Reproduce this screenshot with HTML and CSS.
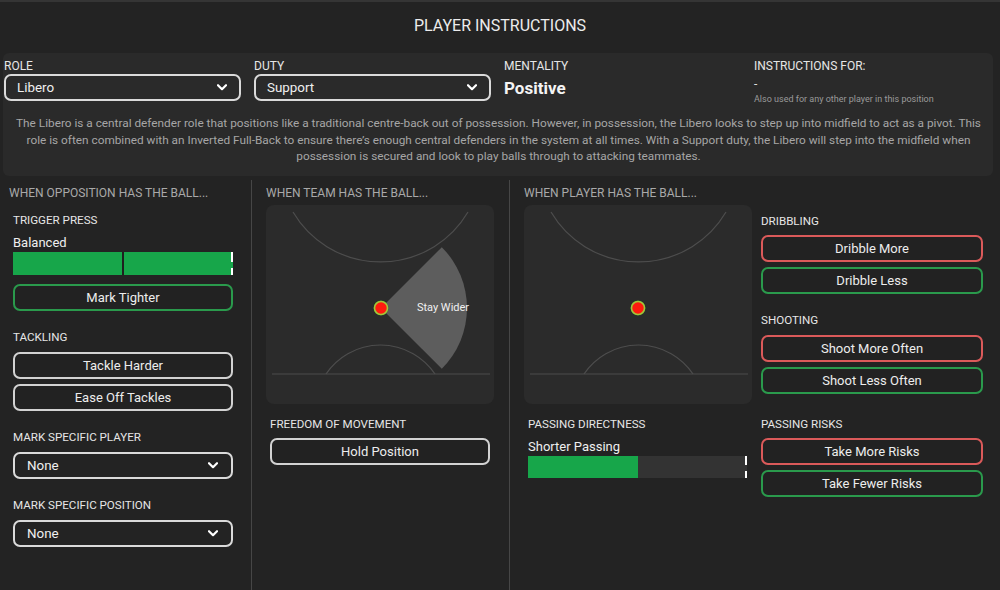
FILE: index.html
```html
<!DOCTYPE html>
<html>
<head>
<meta charset="utf-8">
<link rel="stylesheet" href="styles.css">
</head>
<body>
<div class="title">PLAYER INSTRUCTIONS</div>
<div class="panel">
  <div class="fields">
    <div class="field">
      <div class="flabel">ROLE</div>
      <div class="select"><span>Libero</span><svg class="chev" width="10" height="7" viewBox="0 0 10 7"><path d="M1 1.2 L5 5.2 L9 1.2" fill="none" stroke="#fff" stroke-width="2.2" stroke-linecap="round" stroke-linejoin="round"/></svg></div>
    </div>
    <div class="field">
      <div class="flabel">DUTY</div>
      <div class="select"><span>Support</span><svg class="chev" width="10" height="7" viewBox="0 0 10 7"><path d="M1 1.2 L5 5.2 L9 1.2" fill="none" stroke="#fff" stroke-width="2.2" stroke-linecap="round" stroke-linejoin="round"/></svg></div>
    </div>
    <div class="field">
      <div class="flabel">MENTALITY</div>
      <div class="mentality">Positive</div>
    </div>
    <div class="field">
      <div class="flabel">INSTRUCTIONS FOR:</div>
      <div class="dash">-</div>
      <div class="also">Also used for any other player in this position</div>
    </div>
  </div>
  <p class="desc">The Libero is a central defender role that positions like a traditional centre-back out of possession. However, in possession, the Libero looks to step up into midfield to act as a pivot. This<br>role is often combined with an Inverted Full-Back to ensure there’s enough central defenders in the system at all times. With a Support duty, the Libero will step into the midfield when<br>possession is secured and look to play balls through to attacking teammates.</p>
</div>

<div class="cols">
  <div class="col c1">
    <div class="heading">WHEN OPPOSITION HAS THE BALL...</div>
    <div class="stack">
      <div class="slabel m11">TRIGGER PRESS</div>
      <div class="value m7">Balanced</div>
      <div class="bar m1">
        <div class="seg green"></div>
        <div class="seg green"></div>
      </div>
      <div class="btn green-b m9">Mark Tighter</div>
      <div class="slabel m18">TACKLING</div>
      <div class="btn m7">Tackle Harder</div>
      <div class="btn m5">Ease Off Tackles</div>
      <div class="slabel m18">MARK SPECIFIC PLAYER</div>
      <div class="select sel2 m7"><span>None</span><svg class="chev" width="10" height="7" viewBox="0 0 10 7"><path d="M1 1.2 L5 5.2 L9 1.2" fill="none" stroke="#fff" stroke-width="2.2" stroke-linecap="round" stroke-linejoin="round"/></svg></div>
      <div class="slabel m18">MARK SPECIFIC POSITION</div>
      <div class="select sel2 m7"><span>None</span><svg class="chev" width="10" height="7" viewBox="0 0 10 7"><path d="M1 1.2 L5 5.2 L9 1.2" fill="none" stroke="#fff" stroke-width="2.2" stroke-linecap="round" stroke-linejoin="round"/></svg></div>
    </div>
  </div>

  <div class="col c2">
    <div class="heading">WHEN TEAM HAS THE BALL...</div>
    <div class="pitchbox">
      <svg class="pitch" width="228" height="199" viewBox="0 0 228 199">
        <path d="M27 7 A101.6 101.6 0 0 0 202 7" fill="none" stroke="#4d4d4d" stroke-width="1.2"/>
        <path d="M60 169 A65.7 65.7 0 0 1 169 169" fill="none" stroke="#4d4d4d" stroke-width="1.2"/>
        <path d="M6 169 H224" fill="none" stroke="#4d4d4d" stroke-width="1.2"/>
        <path d="M115 103 L175.8 42.2 A86 86 0 0 1 175.8 163.8 Z" fill="#5d5d5d"/>
        <circle cx="115" cy="103" r="7.5" fill="#2f7d2a"/>
        <circle cx="115" cy="103" r="6.5" fill="#ff1a0e" stroke="#a6c43a" stroke-width="1.6"/>
        <text class="wedge-text" x="177" y="106" text-anchor="middle">Stay Wider</text>
      </svg>
    </div>
    <div class="sub">
      <div class="slabel m12">FREEDOM OF MOVEMENT</div>
      <div class="btn m6">Hold Position</div>
    </div>
  </div>

  <div class="col c3">
    <div class="heading">WHEN PLAYER HAS THE BALL...</div>
    <div class="split">
      <div class="left">
        <div class="pitchbox">
          <svg class="pitch" width="228" height="199" viewBox="0 0 228 199">
            <path d="M27 7 A101.6 101.6 0 0 0 202 7" fill="none" stroke="#4d4d4d" stroke-width="1.2"/>
            <path d="M60 169 A65.7 65.7 0 0 1 169 169" fill="none" stroke="#4d4d4d" stroke-width="1.2"/>
            <path d="M6 169 H224" fill="none" stroke="#4d4d4d" stroke-width="1.2"/>
            <circle cx="114" cy="103" r="7.5" fill="#2f7d2a"/>
            <circle cx="114" cy="103" r="6.5" fill="#ff1a0e" stroke="#a6c43a" stroke-width="1.6"/>
          </svg>
        </div>
        <div class="sub">
          <div class="slabel m12">PASSING DIRECTNESS</div>
          <div class="value m7">Shorter Passing</div>
          <div class="bar pbar m1">
            <div class="fill green" style="width:110px"></div>
          </div>
        </div>
      </div>
      <div class="right">
        <div class="slabel m12">DRIBBLING</div>
        <div class="btn red-b m6">Dribble More</div>
        <div class="btn green-b m5">Dribble Less</div>
        <div class="slabel m18">SHOOTING</div>
        <div class="btn red-b m7">Shoot More Often</div>
        <div class="btn green-b m5">Shoot Less Often</div>
        <div class="slabel m22">PASSING RISKS</div>
        <div class="btn red-b m6">Take More Risks</div>
        <div class="btn green-b m5">Take Fewer Risks</div>
      </div>
    </div>
  </div>
</div>
</body>
</html>
```

FILE: styles.css
```css
* { box-sizing: border-box; }
html, body { margin: 0; padding: 0; }
body {
  width: 1000px;
  height: 590px;
  overflow: hidden;
  background: #232323;
  color: #e4e4e4;
  font-family: Roboto, "Liberation Sans", sans-serif;
  border-top: 2px solid #353535;
}
.title {
  height: 51px;
  padding-top: 14px;
  line-height: 20px;
  font-size: 16px;
  text-align: center;
  color: #ececec;
}
.panel {
  margin: 0 7px 0 3px;
  height: 123px;
  padding: 0 0 0 1px;
  background: #2a2a2a;
  border-radius: 6px;
  overflow: hidden;
}
.fields {
  display: grid;
  grid-template-columns: repeat(4, 237px);
  column-gap: 13px;
  padding-top: 6px;
  height: 48px;
}
.flabel {
  font-size: 12px;
  line-height: 14px;
  color: #e6e6e6;
}
.select {
  margin-top: 1px;
  height: 27px;
  border: 2px solid #dadada;
  border-radius: 7px;
  display: flex;
  align-items: center;
  justify-content: space-between;
  padding: 0 12px 0 11px;
  font-size: 13.4px;
  color: #f0f0f0;
}
.chev { display: block; }
.mentality {
  margin-top: 4px;
  font-size: 17px;
  line-height: 22px;
  font-weight: 700;
  color: #f4f4f4;
}
.dash {
  margin-top: 4px;
  line-height: 14px;
  font-size: 12px;
  color: #ddd;
}
.also {
  margin-top: 2px;
  font-size: 9px;
  line-height: 12px;
  color: #9a9a9a;
}
.desc {
  margin: 14px 0 0 0;
  padding: 0 3px;
  text-align: center;
  font-size: 11.8px;
  line-height: 16.6px;
  color: #a6a6a6;
  white-space: nowrap;
}

.cols {
  margin-top: 4px;
  display: grid;
  grid-template-columns: 252px 258px 1fr;
  height: 410px;
}
.col { padding-top: 5px; }
.c1 { border-right: 1px solid #464646; }
.c2 { border-right: 1px solid #464646; padding-left: 14px; }
.c3 { padding-left: 14px; }
.heading {
  font-size: 12px;
  line-height: 16px;
  color: #a9a9a9;
}
.c1 .heading { padding-left: 9px; }
.stack { margin-left: 13px; width: 220px; display: flex; flex-direction: column; }
.slabel {
  font-size: 11.6px;
  line-height: 16px;
  color: #e6e6e6;
}
.value {
  font-size: 13px;
  line-height: 16px;
  color: #efefef;
}
.m1 { margin-top: 1px; }
.m5 { margin-top: 5px; }
.m6 { margin-top: 6px; }
.m7 { margin-top: 7px; }
.m9 { margin-top: 9px; }
.m11 { margin-top: 11px; }
.m12 { margin-top: 12px; }
.m18 { margin-top: 18px; }
.m22 { margin-top: 22px; }

.bar {
  position: relative;
  height: 23px;
  width: 220px;
  display: flex;
  gap: 2px;
  background: #1f1f1f;
}
.bar::after {
  content: "";
  position: absolute;
  right: 0;
  top: 0;
  bottom: 0;
  width: 2px;
  background: linear-gradient(#fff 0, #fff 42%, transparent 42%, transparent 70%, #fff 70%, #fff 100%);
}
.seg { flex: 1; }
.green { background: #17a64a; }
.pbar { width: 219px; height: 22px; background: #333333; margin-left: 0; }
.fill { height: 100%; }

.btn {
  height: 27px;
  border: 2px solid #d2d2d2;
  border-radius: 7px;
  display: flex;
  align-items: center;
  justify-content: center;
  font-size: 13px;
  color: #ededed;
  background: #222;
}
.green-b { border-color: #2a9a4c; }
.red-b { border-color: #db5a5a; }
.sel2 { margin-top: 7px; padding-left: 12px; padding-right: 13px; }

.pitchbox {
  margin-top: 4px;
  width: 228px;
  height: 199px;
  background: #2b2b2b;
  border-radius: 8px;
}
.pitch { display: block; }
.wedge-text { font-size: 11px; fill: #f0f0f0; font-family: Roboto, "Liberation Sans", sans-serif; }
.sub { margin-left: 4px; width: 220px; display: flex; flex-direction: column; }
.split { display: flex; gap: 9px; }
.left { width: 228px; }
.right { width: 222px; display: flex; flex-direction: column; }
```
